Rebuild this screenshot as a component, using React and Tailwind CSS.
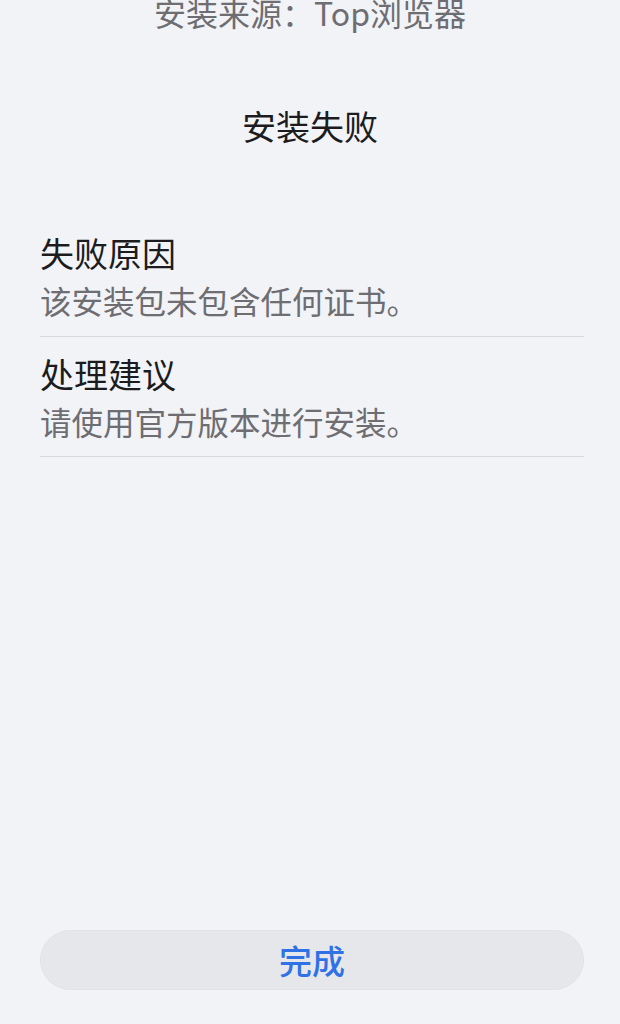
import React from 'react';

const font = { fontFamily: '"Noto Sans CJK SC", "Noto Sans", sans-serif' };

const rows = [
  { title: '失败原因', text: '该安装包未包含任何证书。' },
  { title: '处理建议', text: '请使用官方版本进行安装。' },
];

const App = () => {
  return (
    <div className="min-h-screen h-[1024px] bg-[#f2f3f7] flex flex-col overflow-hidden" style={font}>
      {/* 顶部来源 */}
      <p className="-mt-[4px] text-center text-[32px] leading-none text-[#6d6d72]">安装来源：Top浏览器</p>

      <h1 className="mt-[81px] text-center text-[34px] leading-none text-[#1c1c1e]">安装失败</h1>

      {/* 详情 */}
      <div className="mt-[93px] px-[40px] pr-[36px]">
        {rows.map((row) => (
          <div key={row.title} className="border-b border-[#d8d8dd] pb-[19px] mb-[20px] last:mb-0">
            <div className="text-[34px] leading-none text-[#1c1c1e]">{row.title}</div>
            <div className="mt-[15px] text-[31.5px] leading-none text-[#6d6d72]">{row.text}</div>
          </div>
        ))}
      </div>

      <div className="mt-auto px-[40px] pr-[36px] pb-[34px]">
        <button className="w-full h-[60px] rounded-full bg-[#e6e7eb] border border-[#e2e3e7] text-[33px] leading-none font-medium text-[#3072e5]">
          完成
        </button>
      </div>
    </div>
  );
};

export default App;
